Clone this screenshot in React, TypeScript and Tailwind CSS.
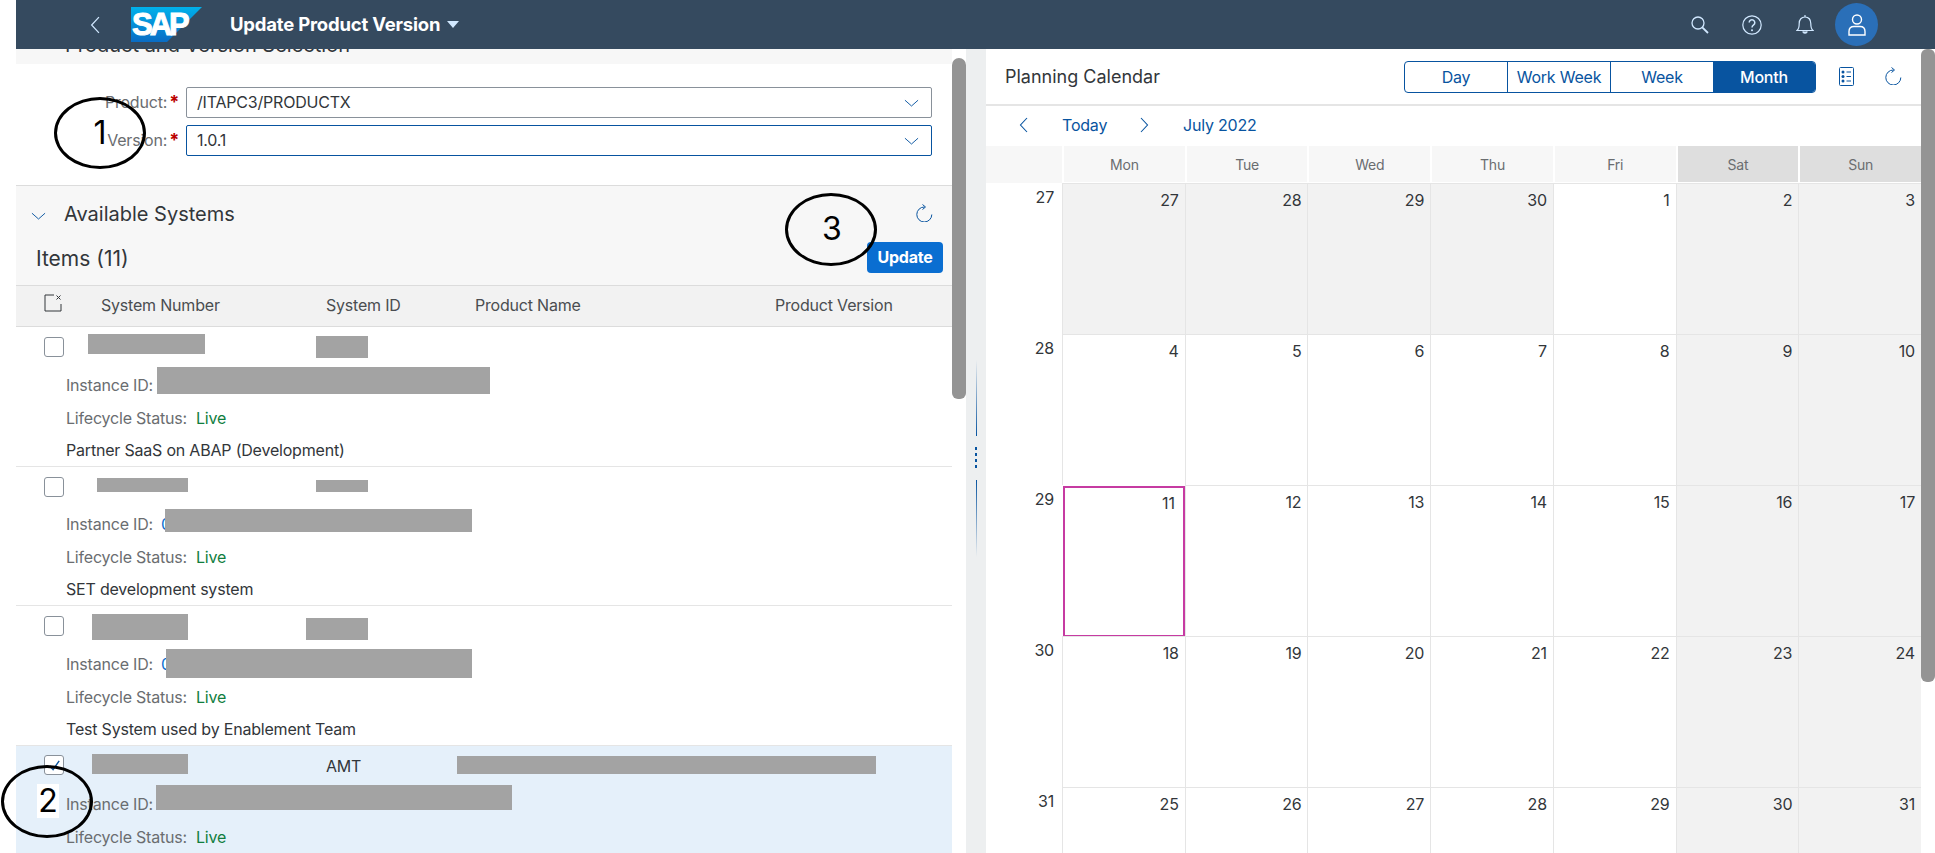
import { ReactNode } from "react";

type SystemRow = {
  height: string;
  labelTop: string;
  desc?: string;
  selected?: boolean;
  checkTop: string;
  blocks: string[];
  amt?: boolean;
};

const rows: SystemRow[] = [
  {
    height: "h-[140px]",
    labelTop: "pt-[47px]",
    checkTop: "mt-[10px]",
    desc: "Partner SaaS on ABAP (Development)",
    blocks: [
      "left-[72px] top-[7px] w-[117px] h-[20px]",
      "left-[300px] top-[9px] w-[52px] h-[22px]",
      "left-[141px] top-[40px] w-[333px] h-[27px]",
    ],
  },
  {
    height: "h-[139px]",
    labelTop: "pt-[46px]",
    checkTop: "mt-[10px]",
    desc: "SET development system",
    blocks: [
      "left-[81px] top-[11px] w-[91px] h-[14px]",
      "left-[300px] top-[13px] w-[52px] h-[12px]",
      "left-[149px] top-[42px] w-[307px] h-[23px]",
    ],
  },
  {
    height: "h-[140px]",
    labelTop: "pt-[47px]",
    checkTop: "mt-[10px]",
    desc: "Test System used by Enablement Team",
    blocks: [
      "left-[76px] top-[8px] w-[96px] h-[26px]",
      "left-[290px] top-[12px] w-[62px] h-[22px]",
      "left-[150px] top-[43px] w-[306px] h-[29px]",
    ],
  },
  {
    height: "h-[108px]",
    labelTop: "pt-[47px]",
    checkTop: "mt-[9px]",
    selected: true,
    amt: true,
    blocks: [
      "left-[76px] top-[8px] w-[96px] h-[20px]",
      "left-[441px] top-[10px] w-[419px] h-[18px]",
      "left-[140px] top-[39px] w-[356px] h-[25px]",
    ],
  },
];

const weeks = [
  { no: 27, days: [27, 28, 29, 30, 1, 2, 3] },
  { no: 28, days: [4, 5, 6, 7, 8, 9, 10] },
  { no: 29, days: [11, 12, 13, 14, 15, 16, 17] },
  { no: 30, days: [18, 19, 20, 21, 22, 23, 24] },
  { no: 31, days: [25, 26, 27, 28, 29, 30, 31] },
];

const weekdays = ["Mon", "Tue", "Wed", "Thu", "Fri", "Sat", "Sun"];

const Chevron = ({ className = "" }: { className?: string }) => (
  <svg viewBox="0 0 16 8" className={className} fill="none" stroke="currentColor" strokeWidth="1">
    <path d="M1 1l7 6.2L15 1" />
  </svg>
);

const SideChevron = ({ left, className = "" }: { left?: boolean; className?: string }) => (
  <svg viewBox="0 0 9 16" className={className} fill="none" stroke="currentColor" strokeWidth="1.1">
    <path d={left ? "M8 1L1.500 8 8 15" : "M1 1l6.500 7L1 15"} />
  </svg>
);

const Refresh = ({ className = "" }: { className?: string }) => (
  <svg viewBox="0 0 18 18" className={className} fill="none" stroke="currentColor" strokeWidth="1">
    <path d="M9.500 3A7.500 7.500 0 1 0 16.800 10.500" />
    <path d="M7.500 0.500L10.500 3 7.500 5.500" />
  </svg>
);

const Checkbox = ({ checked, top }: { checked?: boolean; top: string }) => (
  <div className={`${top} ml-[28px] w-[20px] h-[20px] shrink-0 rounded-[3px] border border-[#89919a] bg-white flex items-center justify-center`}>
    {checked && (
      <svg viewBox="0 0 16 16" className="w-[15px] h-[15px]" fill="none" stroke="#0854a0" strokeWidth="1.500">
        <path d="M3 8.500l3.500 4L13 3" />
      </svg>
    )}
  </div>
);

const Redacted = ({ className }: { className: string }) => (
  <div className={`absolute bg-[#a3a3a3] ${className}`} />
);

const Mark = ({ className, children }: { className: string; children: ReactNode }) => (
  <div className={`absolute rounded-[50%] border-[3px] border-black flex items-center justify-center text-[32px] text-black tracking-normal ${className}`}>
    {children}
  </div>
);

const ShellBar = () => (
  <div className="ml-[16px] h-[49px] bg-[#354a5f] flex items-center text-[#d1e8ff] shrink-0">
    <SideChevron left className="ml-[73px] w-[12px] h-[18px]" />
    <div className="ml-[30px] w-[71px] h-[35px] relative">
      <svg viewBox="0 0 71 35" className="w-full h-full">
        <defs>
          <linearGradient id="sapFill" x1="0" y1="0" x2="0" y2="1">
            <stop offset="0" stopColor="#00b1eb" />
            <stop offset="1" stopColor="#0a6cc4" />
          </linearGradient>
        </defs>
        <path d="M0 0h71L36 35H0z" fill="url(#sapFill)" />
      </svg>
      <span className="absolute left-[1px] top-[3px] text-[31px] leading-[30px] font-bold tracking-[-3px] text-white [-webkit-text-stroke:1px_white] font-['Liberation_Sans',sans-serif]">
        SAP
      </span>
    </div>
    <span className="ml-[28px] text-[18.500px] font-bold text-white whitespace-nowrap">Update Product Version</span>
    <div className="ml-[7px] w-0 h-0 border-l-[6px] border-r-[6px] border-t-[7px] border-l-transparent border-r-transparent border-t-[#d1e8ff]" />
    <div className="flex-1" />
    <svg viewBox="0 0 18 18" className="w-[18px] h-[18px]" fill="none" stroke="currentColor" strokeWidth="1.300">
      <circle cx="7" cy="7" r="6" />
      <path d="M11.300 11.300L17 17" strokeWidth="1.800" />
    </svg>
    <svg viewBox="0 0 20 20" className="ml-[33px] w-[20px] h-[20px]" fill="none" stroke="currentColor" strokeWidth="1.200">
      <circle cx="10" cy="10" r="9.200" />
      <path d="M7.200 7.600a2.800 2.800 0 1 1 4.400 2.300c-1 .7-1.600 1.200-1.600 2.600" strokeWidth="1.500" />
      <circle cx="10" cy="15.200" r="1" fill="currentColor" stroke="none" />
    </svg>
    <svg viewBox="0 0 18 21" className="ml-[34px] w-[18px] h-[21px]" fill="none" stroke="currentColor" strokeWidth="1.200">
      <path d="M1 16.500c2-1.500 2.200-3.500 2.200-7C3.200 5.500 5.500 3 9 3s5.800 2.500 5.800 6.500c0 3.500.2 5.500 2.200 7z" />
      <path d="M9 1v2" />
      <path d="M6.700 17.500a2.400 2.400 0 0 0 4.600 0" fill="currentColor" />
    </svg>
    <div className="ml-[21px] mr-[57px] w-[43px] h-[43px] rounded-full bg-[#2a6fb8] flex items-center justify-center">
      <svg viewBox="0 0 18 22" className="w-[18px] h-[22px]" fill="none" stroke="#ffffff" strokeWidth="1.400">
        <circle cx="9" cy="5.500" r="4.500" />
        <path d="M1 21v-3.500C1 14.500 3 12.500 6 12.500h6c3 0 5 2 5 5V21z" />
      </svg>
    </div>
  </div>
);

const FormRow = ({ label, value, active }: { label: string; value: string; active?: boolean }) => (
  <div className="flex items-center">
    <div className="w-[163px] text-right text-[#6a6d70] whitespace-nowrap -mt-[1px]">
      {label}:<span className="ml-[2px] text-[18px] leading-[16px] text-[#bb0000] font-bold">*</span>
    </div>
    <div
      className={`ml-[7px] w-[746px] h-[31px] rounded-[2px] border flex items-center justify-between pl-[10px] pr-[12px] ${
        active ? "border-[#0854a0]" : "border-[#89919a]"
      }`}
    >
      <span className="-mt-[2px]">{value}</span>
      <Chevron className="w-[15px] h-[8px] text-[#0854a0]" />
    </div>
  </div>
);

const SystemItem = ({ row }: { row: SystemRow }) => (
  <div className={`relative ${row.height} shrink-0 border-b border-[#e5e5e5] ${row.selected ? "bg-[#e5f0fa]" : "bg-white"}`}>
    <div className="absolute left-0 top-0">
      <Checkbox checked={row.selected} top={row.checkTop} />
    </div>
    <div className={`pl-[50px] ${row.labelTop} flex flex-col`}>
      <div className="h-[22px] leading-[22px] text-[#6a6d70] whitespace-nowrap">
        Instance ID:<span className="ml-[8px] text-[#0a6ed1]">0</span>
      </div>
      <div className="mt-[11px] h-[22px] leading-[22px] text-[#6a6d70] whitespace-nowrap">
        Lifecycle Status:<span className="ml-[9px] text-[#107e3e]">Live</span>
      </div>
      {row.desc && <div className="mt-[10px] h-[22px] leading-[22px] whitespace-nowrap">{row.desc}</div>}
    </div>
    {row.amt && <span className="absolute left-[310px] top-[8px]">AMT</span>}
    {row.blocks.map((block) => (
      <Redacted key={block} className={block} />
    ))}
  </div>
);

const LeftPanel = () => (
  <div className="w-[936px] shrink-0 flex flex-col overflow-hidden">
    <div className="h-[15px] bg-[#f7f7f7] overflow-hidden shrink-0">
      <div className="pl-[49px] -mt-[16px] text-[20px] leading-[24px] tracking-normal whitespace-nowrap">Product and Version Selection</div>
    </div>
    <div className="h-[121px] shrink-0 pt-[23px] flex flex-col gap-[7px] bg-white">
      <FormRow label="Product" value="/ITAPC3/PRODUCTX" />
      <FormRow label="Version" value="1.0.1" active />
    </div>
    <div className="h-[100px] shrink-0 border-t border-[#dcdcdc] bg-[#f7f7f7] relative">
      <div className="flex items-center pt-[16px]">
        <Chevron className="ml-[15px] w-[15px] h-[8px] text-[#0854a0] mt-[3px]" />
        <span className="ml-[18px] text-[20px] leading-[24px] tracking-normal whitespace-nowrap">Available Systems</span>
        <div className="flex-1" />
        <Refresh className="mr-[19px] -mt-[2px] w-[18px] h-[18px] text-[#0854a0]" />
      </div>
      <div className="flex items-center justify-between mt-[16px] pl-[20px] pr-[9px]">
        <span className="text-[21px] tracking-normal mt-[1px]">Items (11)</span>
        <button className="w-[76px] h-[31px] -mt-[2px] rounded-[4px] bg-[#0a6ed1] text-white font-bold">Update</button>
      </div>
    </div>
    <div className="h-[42px] shrink-0 border-y border-[#dcdcdc] bg-[#f2f2f2] relative flex items-center pb-[3px] text-[#4a4d50]">
      <svg viewBox="0 0 18 18" className="absolute left-[28px] top-[8px] w-[18px] h-[18px]" fill="none" stroke="#32363a" strokeWidth="1">
        <path d="M10 1H1v16h16v-7" />
        <path d="M12.500 1.500l4 4M16.500 1.500l-4 4" />
      </svg>
      <span className="w-[310px] pl-[85px] whitespace-nowrap">System Number</span>
      <span className="w-[149px] whitespace-nowrap">System ID</span>
      <span className="w-[300px] whitespace-nowrap">Product Name</span>
      <span className="whitespace-nowrap">Product Version</span>
    </div>
    {rows.map((row) => (
      <SystemItem key={row.height + row.labelTop + row.checkTop} row={row} />
    ))}
  </div>
);

const Splitter = () => (
  <div className="w-[20px] shrink-0 bg-[#edeff0] flex flex-col items-center pt-[311px]">
    <div className="w-px h-[76px] bg-gradient-to-b from-transparent to-[#0854a0]" />
    <div className="mt-[11px] flex flex-col gap-[3px]">
      <div className="w-[2px] h-[3px] bg-[#0854a0]" />
      <div className="w-[2px] h-[3px] bg-[#0854a0]" />
      <div className="w-[2px] h-[3px] bg-[#0854a0]" />
      <div className="w-[2px] h-[3px] bg-[#0854a0]" />
    </div>
    <div className="mt-[12px] w-px h-[77px] bg-gradient-to-b from-[#0854a0] to-transparent" />
  </div>
);

const ViewSwitch = () => (
  <div className="flex h-[32px] rounded-[4px] border border-[#0854a0] text-[#0854a0] overflow-hidden">
    <div className="w-[103px] flex items-center justify-center border-r border-[#0854a0]">Day</div>
    <div className="w-[103px] flex items-center justify-center border-r border-[#0854a0] whitespace-nowrap">Work Week</div>
    <div className="w-[102px] flex items-center justify-center">Week</div>
    <div className="w-[102px] flex items-center justify-center bg-[#0854a0] text-white font-medium">Month</div>
  </div>
);

const Calendar = () => (
  <div className="w-[935px] shrink-0 flex flex-col bg-white overflow-hidden">
    <div className="h-[57px] shrink-0 border-b-2 border-[#e5e5e5] flex items-center pl-[19px]">
      <span className="w-[399px] text-[18px] tracking-normal whitespace-nowrap">Planning Calendar</span>
      <ViewSwitch />
      <svg viewBox="0 0 15 19" className="ml-[23px] w-[15px] h-[19px]" fill="none" stroke="#0854a0" strokeWidth="1">
        <rect x="0.500" y="0.500" width="14" height="18" rx="1" />
        <circle cx="4" cy="5" r="1.500" fill="#0854a0" stroke="none" />
        <circle cx="4" cy="9.500" r="1.500" fill="#0854a0" stroke="none" />
        <circle cx="4" cy="14" r="1.500" fill="#0854a0" stroke="none" />
        <path d="M7.500 5H12M7.500 9.500H12M7.500 14H12" />
      </svg>
      <Refresh className="ml-[30px] -mt-[2px] w-[18px] h-[18px] text-[#0854a0]" />
    </div>
    <div className="h-[40px] shrink-0 pb-[2px] flex items-center text-[#0854a0] whitespace-nowrap">
      <SideChevron left className="ml-[33px] w-[9px] h-[16px]" />
      <span className="ml-[34px] w-[44px]">Today</span>
      <SideChevron className="ml-[34px] w-[9px] h-[16px]" />
      <span className="ml-[34px]">July 2022</span>
    </div>
    <div className="h-[37px] shrink-0 grid grid-cols-[76px_repeat(7,1fr)] gap-x-[2px] bg-white">
      <div className="bg-[#f7f7f7]" />
      {weekdays.map((day, i) => (
        <div
          key={day}
          className={`flex items-center justify-center text-[14px] text-[#6a6d70] mb-[1px] ${i > 4 ? "bg-[#dedede]" : "bg-[#f7f7f7]"}`}
        >
          {day}
        </div>
      ))}
    </div>
    {weeks.map((week) => (
      <div key={week.no} className="h-[151px] shrink-0 grid grid-cols-[76px_repeat(7,1fr)]">
        <div className="text-right pr-[8px] pt-[2px]">{week.no}</div>
        {week.days.map((day, i) => {
          const muted = i > 4 || (week.no === 27 && i < 4);
          const today = week.no === 29 && i === 0;
          return (
            <div
              key={i}
              className={`text-right ${
                today
                  ? "border-[2px] border-[#c63ba2] mt-px -mb-px ml-px pr-[8px] pt-[3px] bg-white"
                  : `border-l border-t border-[#e5e5e5] pr-[6px] pt-[4px] ${muted ? "bg-[#f2f2f2]" : "bg-white"}`
              }`}
            >
              {day}
            </div>
          );
        })}
      </div>
    ))}
  </div>
);

const App = () => (
  <div className="relative w-[1935px] h-[853px] overflow-hidden bg-white flex flex-col text-[16px] tracking-[-0.2px] text-[#32363a] font-['Inter',sans-serif]">
    <ShellBar />
    <div className="flex flex-1 min-h-0 pl-[16px]">
      <LeftPanel />
      <div className="w-[14px] shrink-0 pt-[9px] bg-white">
        <div className="h-[341px] rounded-t-[7px] rounded-b-[6px] bg-[#949494]" />
      </div>
      <Splitter />
      <Calendar />
      <div className="w-[14px] shrink-0">
        <div className="h-[633px] rounded-[6px] bg-[#949494]" />
      </div>
    </div>
    <Mark className="left-[54px] top-[97px] w-[92px] h-[72px]">1</Mark>
    <Mark className="left-[785px] top-[193px] w-[92px] h-[73px]">
      <span className="ml-[2px] -mt-[2px]">3</span>
    </Mark>
    <Mark className="left-[1px] top-[765px] w-[92px] h-[73px]">
      <span className="bg-white leading-[34px] px-[1px] -mt-[2px] ml-[2px]">2</span>
    </Mark>
  </div>
);

export default App;
